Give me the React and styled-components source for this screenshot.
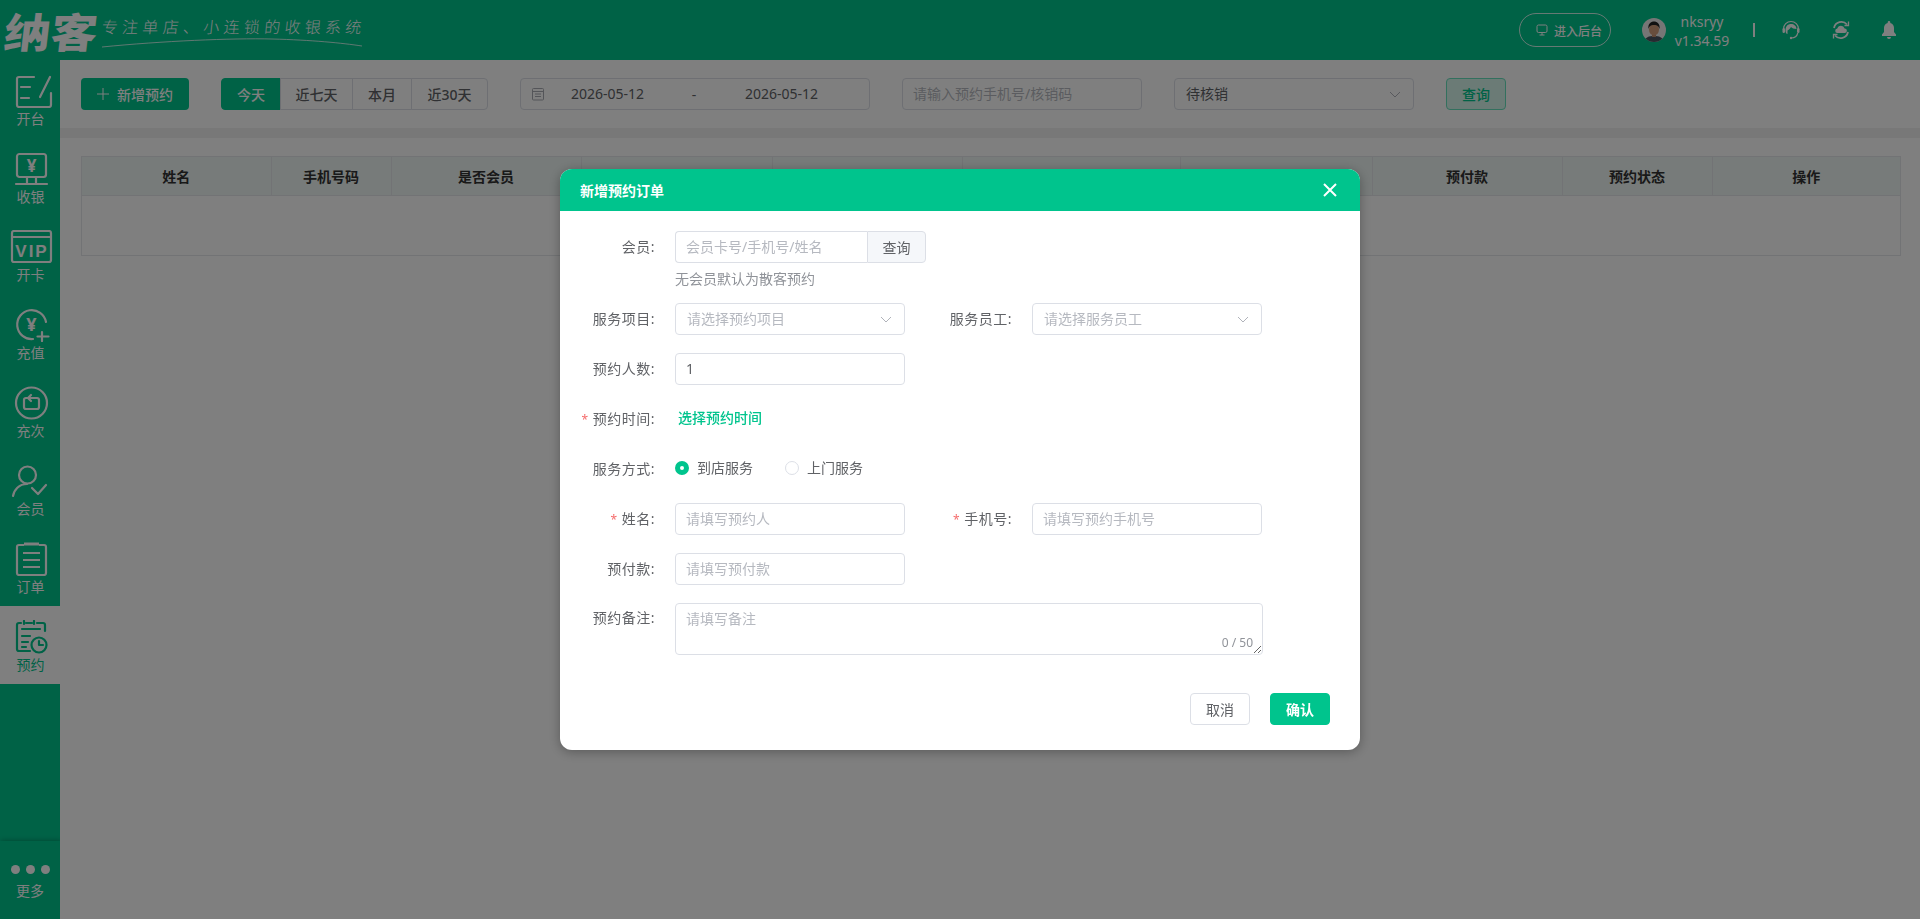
import React from "react";
import styled, { createGlobalStyle } from "styled-components";

const Global = createGlobalStyle`
  html, body { margin: 0; padding: 0; height: 100%; overflow: hidden; }
  body { font-family: "Noto Sans", "Noto Sans CJK SC", sans-serif; font-size: 14px; background: #fff; }
  *, *::before, *::after { box-sizing: border-box; }
`;

const GREEN = "#00c48d";

const Page = styled.div`
  width: 1920px; height: 919px; display: flex; flex-direction: column; position: relative; overflow: hidden;
`;
const Header = styled.header`
  height: 60px; flex: none; background: ${GREEN}; display: flex; align-items: center; color: #fff; padding-right: 23px;
`;
const Logo = styled.div`
  display: flex; align-items: flex-start; padding-left: 5px; flex: 1;
`;
const LogoMark = styled.span`
  font: 900 41px/60px "Noto Sans CJK SC", sans-serif; width: 97px; height: 60px;
  display: block; transform-origin: left center; transform: scaleX(1.13) skewX(-6deg); white-space: nowrap;
`;
const Slogan = styled.div`
  display: flex; flex-direction: column; margin-top: 16px; width: 262px;
`;
const SloganText = styled.span`
  font: 300 16px/20px "Noto Sans CJK SC", sans-serif; letter-spacing: 4.3px; transform: skewX(-6deg); white-space: nowrap;
`;
const Backstage = styled.button`
  width: 92px; height: 34px; border-radius: 17px; border: 1px solid rgba(255,255,255,.8); background: transparent;
  color: #fff; font: 500 12px "Noto Sans CJK SC", sans-serif; display: flex; align-items: center; justify-content: center; gap: 6px; padding: 0 0 0 8px; flex: none;
`;
const Avatar = styled.svg`
  width: 24px; height: 24px; margin-left: 31px; flex: none;
`;
const User = styled.div`
  width: 72px; flex: none; text-align: center; font-size: 14px; line-height: 19px; margin-top: 1px;
`;
const Divider = styled.div`
  width: 2px; height: 14px; background: #fff; margin-left: 15px; flex: none;
`;
const HeaderIcon = styled.svg`
  width: ${p => p.$w}px; height: 20px; margin-left: ${p => p.$ml}px; flex: none; display: block;
`;

const Body = styled.div`
  flex: 1; display: flex; min-height: 0;
`;
const Sidebar = styled.nav`
  width: 60px; flex: none; background: ${GREEN}; display: flex; flex-direction: column; position: relative;
`;
const NavItem = styled.div`
  height: 78px; flex: none; display: flex; flex-direction: column; align-items: center; justify-content: flex-start; padding: 14px 0 0 1px;
  background: ${p => (p.$active ? "#fff" : "transparent")}; color: ${p => (p.$active ? GREEN : "#fff")};
  font: 400 14px/18px "Noto Sans CJK SC", sans-serif;
  svg { display: block; height: 34px; width: 44px; margin-bottom: 1px; }
`;
const More = styled.div`
  margin-top: auto; height: 78px; display: flex; flex-direction: column; align-items: center; padding-top: 24px; color: #fff;
  font: 400 14px/18px "Noto Sans CJK SC", sans-serif; box-shadow: 0 -2px 4px rgba(0,0,0,.12), 3px 0 4px rgba(0,0,0,.12);
`;
const Dots = styled.div`
  display: flex; gap: 6px; margin-bottom: 7px;
`;
const Dot = styled.i`
  width: 9px; height: 9px; border-radius: 50%; background: #fff; display: block;
`;
const Main = styled.main`
  flex: 1; background: #f0f0f0; display: flex; flex-direction: column; box-shadow: inset 3px 0 3px -1px rgba(0,0,0,.1); position: relative;
`;
const Toolbar = styled.div`
  height: 68px; flex: none; background: #fff; padding: 18px 0 0 21px; display: flex; gap: 32px; align-items: flex-start;
`;
const PrimaryBtn = styled.div`
  width: 108px; height: 32px; background: ${GREEN}; color: #fff; border-radius: 4px; display: flex; align-items: center; justify-content: center; gap: 8px;
  font: 500 14px "Noto Sans CJK SC", sans-serif;
`;
const Segments = styled.div`
  display: flex; height: 32px;
`;
const Segment = styled.div`
  width: ${p => p.$w}px; display: flex; align-items: center; justify-content: center; font: 500 14px "Noto Sans", "Noto Sans CJK SC", sans-serif;
  color: ${p => (p.$on ? "#fff" : "#606266")}; background: ${p => (p.$on ? GREEN : "#fff")};
  border: 1px solid ${p => (p.$on ? GREEN : "#dcdfe6")}; margin-left: ${p => (p.$first ? 0 : "-1px")};
  &:first-child { border-radius: 4px 0 0 4px; }
  &:last-child { border-radius: 0 4px 4px 0; }
`;
const DateBox = styled.div`
  width: 350px; height: 32px; border: 1px solid #dcdfe6; border-radius: 4px; display: flex; align-items: center; padding-left: 10px; color: #606266; font-size: 14px;
  svg { flex: none; }
`;
const DateVal = styled.span`
  width: 72px; white-space: nowrap; line-height: 1; margin-left: ${p => p.$ml || 0}px;
`;
const Dash = styled.span`
  width: 102px; text-align: center;
`;
const FilterInput = styled.input`
  width: ${p => p.$w || 240}px; height: 32px; border: 1px solid #dcdfe6; border-radius: 4px; padding: 0 10px 1px; font: 14px "Noto Sans", "Noto Sans CJK SC", sans-serif; color: #606266; outline: none; display: block; flex: none; background: #fff;
  &::placeholder { color: #b6b9c0; opacity: 1; }
`;
const SelectBox = styled.div`
  width: ${p => p.$w || 240}px; height: 32px; border: 1px solid #dcdfe6; border-radius: 4px; padding: 0 12px 2px 11px; display: flex; align-items: center; justify-content: space-between;
  font-size: 14px; color: ${p => (p.$placeholder ? "#b6b9c0" : "#606266")}; flex: none; background: #fff;
  svg { margin-top: 2px; }
`;
const QueryBtn = styled.div`
  width: 60px; height: 32px; border: 1px solid #66e0bc; background: #d6f6ec; color: ${GREEN}; border-radius: 4px; display: flex; align-items: center; justify-content: center; font: 500 14px "Noto Sans CJK SC", sans-serif;
`;
const Band = styled.div`
  height: 10px; flex: none; background: #f0f0f0;
`;
const Content = styled.div`
  flex: 1; background: #fff; padding: 18px 19px 0 21px;
`;
const Table = styled.div`
  width: 1820px; height: 100px; border: 1px solid #e4e7ea;
`;
const HeadRow = styled.div`
  height: 39px; display: flex; background: #eef6f4; border-bottom: 1px solid #e4e7ea;
`;
const HeadCell = styled.div`
  width: ${p => p.$w}px; flex: none; border-right: 1px solid #e4e7ea; display: flex; align-items: center; justify-content: center;
  font: 700 14px "Noto Sans CJK SC", sans-serif; color: #333;
  &:last-child { border-right: none; }
`;

const Overlay = styled.div`
  position: fixed; inset: 0; background: rgba(0,0,0,.5); display: flex; justify-content: center; align-items: flex-start; padding-top: 169px;
`;
const Modal = styled.div`
  width: 800px; height: 581px; background: #fff; border-radius: 12px; overflow: hidden; box-shadow: 0 2px 12px rgba(0,0,0,.3);
`;
const ModalHead = styled.div`
  height: 42px; background: ${GREEN}; color: #fff; display: flex; align-items: center; justify-content: space-between; padding: 0 23px 0 20px;
  font: 700 14px "Noto Sans CJK SC", sans-serif;
`;
const ModalBody = styled.div`
  padding: 20px 20px 0;
`;
const Row = styled.div`
  display: flex; gap: 32px; margin-bottom: ${p => (p.$tight ? 0 : 18)}px; height: ${p => (p.$tall ? 52 : 32)}px;
`;
const Field = styled.div`
  display: flex; align-items: ${p => (p.$top ? "flex-start" : "center")};
`;
const Label = styled.label`
  width: 95px; padding-right: 20px; text-align: right; color: #606266; font-size: 14px; line-height: 32px; flex: none; white-space: nowrap; letter-spacing: .5px;
  ${p => p.$top && "line-height: 30px;"}
`;
const Star = styled.span`
  color: #f56c6c; margin-right: 4px; font-size: 12px;
`;
const Hint = styled.div`
  margin: 6px 0 14px 95px; color: #909399; font-size: 14px; line-height: 20px;
`;
const Group = styled.div`
  display: flex; width: 251px; height: 32px;
`;
const GroupInput = styled(FilterInput)`
  width: 192px; border-radius: 4px 0 0 4px; border-right: none;
`;
const Addon = styled.div`
  width: 59px; background: #f5f7fa; border: 1px solid #dcdfe6; border-radius: 0 4px 4px 0; color: #606266; display: flex; align-items: center; justify-content: center; padding-bottom: 1px;
`;
const LinkText = styled.span`
  color: ${GREEN}; font: 500 14px/28px "Noto Sans CJK SC", sans-serif; margin: 0 0 4px 3px;
`;
const Radios = styled.div`
  display: flex; gap: 32px; align-items: center; height: 32px;
`;
const Radio = styled.span`
  display: flex; align-items: center; gap: 8px; color: #606266; font-size: 14px; line-height: 28px; padding-bottom: 3px;
  &::before { content: ""; width: 14px; height: 14px; border-radius: 50%; display: block;
    ${p => (p.$on ? `border: 5px solid ${GREEN}; background: #fff;` : "border: 1px solid #dcdfe6; background: #fff;")}
  }
`;
const AreaWrap = styled.div`
  position: relative; width: 588px; height: 52px;
`;
const Area = styled.textarea`
  width: 100%; height: 100%; display: block; border: 1px solid #dcdfe6; border-radius: 4px; padding: 4px 10px; font: 14px/22px "Noto Sans", "Noto Sans CJK SC", sans-serif; outline: none; resize: vertical; background: #fff;
  &::placeholder { color: #b6b9c0; opacity: 1; }
`;
const Counter = styled.span`
  position: absolute; right: 10px; bottom: 4px; font-size: 12px; line-height: 16px; color: #909399;
`;
const Footer = styled.div`
  display: flex; justify-content: flex-end; gap: 20px; padding: 20px 10px 0 0;
`;
const DlgBtn = styled.div`
  width: 60px; height: 32px; border-radius: 4px; display: flex; align-items: center; justify-content: center; font: ${p => (p.$primary ? 700 : 400)} 14px "Noto Sans CJK SC", sans-serif;
  background: ${p => (p.$primary ? GREEN : "#fff")}; color: ${p => (p.$primary ? "#fff" : "#606266")}; border: 1px solid ${p => (p.$primary ? GREEN : "#dcdfe6")};
`;

const Chevron = () => (
  <svg width="12" height="7" viewBox="0 0 12 7" fill="none" stroke="#b0b3ba" strokeWidth="1"><path d="M1 1l5 5 5-5" /></svg>
);
const s = { fill: "none", stroke: "currentColor", strokeWidth: 2.2, strokeLinecap: "round", strokeLinejoin: "round" };

const IconOpen = () => (
  <svg viewBox="0 0 44 34"><g {...s}><path d="M25 3H10a2 2 0 0 0-2 2v26a2 2 0 0 0 2 2h30a2 2 0 0 0 2-2V19" /><path d="M12 13h9M12 24h8M41 3L31 23" /></g></svg>
);
const IconCash = () => (
  <svg viewBox="0 0 44 34"><g {...s}><rect x="8" y="2" width="29" height="23" rx="2.5" /><path d="M18 25v7M27 25v7M7 32h31" /></g><text x="22.5" y="20" textAnchor="middle" fontSize="17" fontWeight="700" fontFamily="Noto Sans" fill="currentColor">¥</text></svg>
);
const IconVip = () => (
  <svg viewBox="0 0 44 34"><g {...s} strokeLinecap="butt"><rect x="3" y="1" width="39" height="31" rx="2" /><path d="M3 7h39" /></g><text x="23" y="27" textAnchor="middle" fontSize="17" fontWeight="700" letterSpacing="2" fontFamily="Liberation Sans" fill="currentColor">VIP</text></svg>
);
const IconCharge = () => (
  <svg viewBox="0 0 44 34"><g {...s}><path d="M37 14A14.5 14.5 0 1 0 24 31" /><path d="M33 24v9M28.5 28.5h11" /></g><text x="22.5" y="23" textAnchor="middle" fontSize="18" fontWeight="700" fontFamily="Noto Sans" fill="currentColor">¥</text></svg>
);
const IconTimes = () => (
  <svg viewBox="0 0 44 34"><g {...s}><circle cx="22.5" cy="17" r="15.5" /><path d="M18 12h-1a2 2 0 0 0-2 2v7a2 2 0 0 0 2 2h11a2 2 0 0 0 2-2v-7a2 2 0 0 0-2-2h-7M22 9l-3 3 3 3" /></g></svg>
);
const IconMember = () => (
  <svg viewBox="0 0 44 34"><g {...s}><circle cx="18.5" cy="11" r="8.5" /><path d="M4 32c1-6 6-12 14-12" /><path d="M23 24l6 6 8-9" /></g></svg>
);
const IconOrder = () => (
  <svg viewBox="0 0 44 34"><g {...s} strokeLinecap="butt"><path d="M15 3h-5a2 2 0 0 0-2 2v26a2 2 0 0 0 2 2h25a2 2 0 0 0 2-2V5a2 2 0 0 0-2-2h-5" /><path d="M15 2h15" strokeWidth="3" /><path d="M14 11h17M14 18h17M14 25h17" /></g></svg>
);
const IconBooking = () => (
  <svg viewBox="0 0 44 34"><g {...s}><path d="M12 3H10a2 2 0 0 0-2 2v24a2 2 0 0 0 2 2h11M17 3h6M28 3h6a2 2 0 0 1 2 2v6" /><path d="M15 1v3M25 1v3" /><path d="M13 9h18M13 16h8M13 22h6M13 27h4" /><circle cx="30" cy="25" r="7.5" /><path d="M30 21v4h4" /></g></svg>
);

const nav = [
  ["开台", IconOpen], ["收银", IconCash], ["开卡", IconVip], ["充值", IconCharge],
  ["充次", IconTimes], ["会员", IconMember], ["订单", IconOrder], ["预约", IconBooking],
];
const cols = [189.5, 120, 190, 191, 190, 218, 192, 190, 150, 187.5];
const heads = { 0: "姓名", 1: "手机号码", 2: "是否会员", 7: "预付款", 8: "预约状态", 9: "操作" };

export default function App() {
  return (
    <Page>
      <Global />
      <Header>
        <Logo>
          <LogoMark>纳客</LogoMark>
          <Slogan>
            <SloganText>专注单店、小连锁的收银系统</SloganText>
            <svg width="262" height="14" viewBox="0 0 262 14" fill="none"><path d="M0 11C60 5 130 2 170 3s70 4 90 7" stroke="#fff" strokeOpacity=".75" strokeWidth="1" /></svg>
          </Slogan>
        </Logo>
        <Backstage>
          <svg width="12" height="12" viewBox="0 0 12 12" fill="none" stroke="#fff" strokeWidth="1"><rect x="1" y="1" width="10" height="7.5" rx="1.5" /><path d="M3.5 11h5M6 8.5V11" /></svg>
          进入后台
        </Backstage>
        <Avatar viewBox="0 0 24 24">
          <defs><clipPath id="av"><circle cx="12" cy="12" r="12" /></clipPath></defs>
          <g clipPath="url(#av)">
            <rect width="24" height="24" fill="#ececec" />
            <path d="M2 24c1-5 5-6 10-6s9 1 10 6z" fill="#4a5560" />
            <rect x="10" y="15" width="4" height="4" fill="#c08e6e" />
            <ellipse cx="12" cy="11.5" rx="5" ry="6" fill="#d09c7a" />
            <path d="M6.5 11C5.5 5 10 3.5 12 3.5s6.5 1.5 5.5 7.5c-1-3-2-4-5.500-4s-4.500 1-5.500 4z" fill="#222" />
          </g>
        </Avatar>
        <User>nksryy<br />v1.34.59</User>
        <Divider />
        <HeaderIcon $w={18} $ml={27} viewBox="0 0 18 20" fill="#fff">
          <path d="M1.5 9A7.5 7.5 0 0 1 16.500 9" fill="none" stroke="#fff" strokeWidth="1.2" />
          <rect x="0.500" y="8" width="2.500" height="5" rx="1.200" />
          <rect x="15" y="8" width="2.500" height="5" rx="1.200" />
          <path d="M3.500 10.500C3.500 6 6 4 9 4s5.500 2 5.500 5C12 9 10 8 9 7c-1 2-2.500 3-3.500 3.500L5.500 14C4.500 14 3.500 13 3.500 10.500z" />
          <path d="M15.800 13C15 16 12.500 18 9.500 18" fill="none" stroke="#fff" strokeWidth="1.200" />
          <circle cx="9" cy="18" r="1.200" />
        </HeaderIcon>
        <HeaderIcon $w={20} $ml={31} viewBox="0 0 20 20" fill="none" stroke="#fff" strokeWidth="1.800">
          <path d="M3 8a7.500 7.500 0 0 1 13-3.500M17 12a7.500 7.500 0 0 1-13 3.500" />
          <path d="M17.500 1.500v4h-4M2.500 18.500v-4h4" strokeWidth="1.300" />
          <path d="M6.500 13a2.200 2.200 0 0 1-.2-4.400 3.800 3.800 0 0 1 7.300-.2 2.300 2.300 0 0 1 0 4.600z" fill="#fff" stroke="none" />
        </HeaderIcon>
        <HeaderIcon $w={16} $ml={30} viewBox="0 0 16 20" fill="#fff">
          <path d="M8 1a1.300 1.300 0 0 0-1.300 1.300v.6C4 3.500 3 5.700 3 8v4l-2 2.500V16h14v-1.500L13 12V8c0-2.300-1-4.500-3.700-5.100v-.6A1.300 1.300 0 0 0 8 1zM6 17a2 2 0 0 0 4 0z" />
        </HeaderIcon>
      </Header>
      <Body>
        <Sidebar>
          {nav.map(([t, I], i) => (
            <NavItem key={t} $active={i === 7}><I />{t}</NavItem>
          ))}
          <More>
            <Dots><Dot /><Dot /><Dot /></Dots>
            更多
          </More>
        </Sidebar>
        <Main>
          <Toolbar>
            <PrimaryBtn>
              <svg width="12" height="12" viewBox="0 0 12 12" stroke="#fff" strokeWidth="1"><path d="M6 0v12M0 6h12" /></svg>
              新增预约
            </PrimaryBtn>
            <Segments>
              <Segment $w={60} $on $first>今天</Segment>
              <Segment $w={73}>近七天</Segment>
              <Segment $w={60}>本月</Segment>
              <Segment $w={77}>近30天</Segment>
            </Segments>
            <DateBox>
              <svg width="14" height="14" viewBox="0 0 14 14" fill="none" stroke="#a8abb2" strokeWidth="1"><rect x="1.500" y="1.500" width="11" height="11.500" rx="1" /><path d="M1.500 4.500h11M4 7h6M4 9.500h6" /></svg>
              <DateVal $ml={26}>2026-05-12</DateVal>
              <Dash>-</Dash>
              <DateVal>2026-05-12</DateVal>
            </DateBox>
            <FilterInput placeholder="请输入预约手机号/核销码" />
            <SelectBox>待核销<Chevron /></SelectBox>
            <QueryBtn>查询</QueryBtn>
          </Toolbar>
          <Band />
          <Content>
            <Table>
              <HeadRow>
                {cols.map((w, i) => <HeadCell key={i} $w={w}>{heads[i]}</HeadCell>)}
              </HeadRow>
            </Table>
          </Content>
        </Main>
      </Body>
      <Overlay>
        <Modal>
          <ModalHead>
            新增预约订单
            <svg width="14" height="14" viewBox="0 0 14 14" stroke="#fff" strokeWidth="2"><path d="M1 1l12 12M13 1L1 13" /></svg>
          </ModalHead>
          <ModalBody>
            <Row $tight>
              <Field>
                <Label>会员:</Label>
                <Group>
                  <GroupInput placeholder="会员卡号/手机号/姓名" />
                  <Addon>查询</Addon>
                </Group>
              </Field>
            </Row>
            <Hint>无会员默认为散客预约</Hint>
            <Row>
              <Field><Label>服务项目:</Label><SelectBox $w={230} $placeholder>请选择预约项目<Chevron /></SelectBox></Field>
              <Field><Label>服务员工:</Label><SelectBox $w={230} $placeholder>请选择服务员工<Chevron /></SelectBox></Field>
            </Row>
            <Row>
              <Field><Label>预约人数:</Label><FilterInput $w={230} defaultValue="1" /></Field>
            </Row>
            <Row>
              <Field><Label><Star>*</Star>预约时间:</Label><LinkText>选择预约时间</LinkText></Field>
            </Row>
            <Row>
              <Field><Label>服务方式:</Label>
                <Radios><Radio $on>到店服务</Radio><Radio>上门服务</Radio></Radios>
              </Field>
            </Row>
            <Row>
              <Field><Label><Star>*</Star>姓名:</Label><FilterInput $w={230} placeholder="请填写预约人" /></Field>
              <Field><Label><Star>*</Star>手机号:</Label><FilterInput $w={230} placeholder="请填写预约手机号" /></Field>
            </Row>
            <Row>
              <Field><Label>预付款:</Label><FilterInput $w={230} placeholder="请填写预付款" /></Field>
            </Row>
            <Row $tall>
              <Field $top><Label $top>预约备注:</Label>
                <AreaWrap><Area placeholder="请填写备注" /><Counter>0 / 50</Counter></AreaWrap>
              </Field>
            </Row>
            <Footer>
              <DlgBtn>取消</DlgBtn>
              <DlgBtn $primary>确认</DlgBtn>
            </Footer>
          </ModalBody>
        </Modal>
      </Overlay>
    </Page>
  );
}
